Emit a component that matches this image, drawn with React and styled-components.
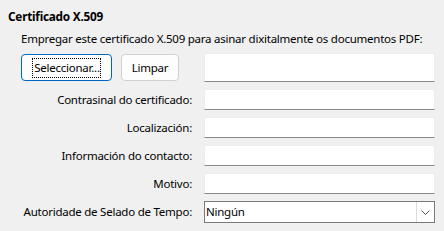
import React from "react";
import styled, { createGlobalStyle } from "styled-components";

const Global = createGlobalStyle`
  html, body { margin: 0; padding: 0; background: #f0f0f0; }
  body { font-family: "Noto Sans", "Segoe UI", sans-serif; font-size: 11.5px; letter-spacing: -0.24px; color: #000; }
`;

const Page = styled.div`
  width: 444px;
  height: 231px;
  box-sizing: border-box;
  padding: 7px 9px 0 8px;
  background: #f0f0f0;
`;

const Title = styled.div`
  font-weight: 700;
  font-size: 11.8px;
  line-height: 18px;
  height: 18px;
`;

const Section = styled.div`
  padding-left: 13px;
`;

const Description = styled.div`
  margin-top: 5px;
  line-height: 18px;
  height: 18px;
  white-space: nowrap;
`;

const Grid = styled.div`
  margin-top: 5px;
  display: grid;
  grid-template-columns: 171px 1fr;
  column-gap: 12px;
  row-gap: 7px;
  align-items: center;
`;

const ButtonRow = styled.div`
  display: flex;
  gap: 9px;
  align-items: center;
`;

const Button = styled.button`
  font: inherit;
  letter-spacing: inherit;
  color: #000;
  height: 27px;
  width: ${(p) => p.$w}px;
  box-sizing: border-box;
  padding: 0;
  border-radius: 4px;
  background: #fdfdfd;
  border: 1px solid ${(p) => (p.$primary ? "#0067c0" : "#d0d0d0")};
  display: flex;
  align-items: center;
  justify-content: center;
  cursor: default;
`;

const FocusText = styled.span`
  outline: 1px dotted #000;
  outline-offset: 0px;
  padding: 1px 0 1px 1px;
  line-height: 16px;
`;

const Label = styled.label`
  text-align: right;
  white-space: nowrap;
  line-height: 18px;
`;

const Input = styled.div`
  height: ${(p) => (p.$tall ? "29px" : "21px")};
  box-sizing: border-box;
  background: #fff;
  border: 1px solid #ececec;
  border-bottom: 1px solid #8a8a8a;
`;

const Select = styled.div`
  height: 22px;
  box-sizing: border-box;
  background: #fff;
  border: 1px solid #7a7a7a;
  display: flex;
  align-items: stretch;
  padding: 0 0 0 1px;
`;

const SelectText = styled.div`
  flex: 1;
  line-height: 20px;
`;

const DropButton = styled.div`
  width: 17px;
  border-left: 1px solid #dcdcdc;
  background: #fff;
  display: flex;
  align-items: center;
  justify-content: center;
`;

export default function App() {
  return (
    <Page>
      <Global />
      <Title>Certificado X.509</Title>
      <Section>
        <Description>
          Empregar este certificado X.509 para asinar dixitalmente os documentos PDF:
        </Description>
        <Grid>
          <ButtonRow>
            <Button $primary $w={91}>
              <FocusText>Seleccionar...</FocusText>
            </Button>
            <Button $w={58}>Limpar</Button>
          </ButtonRow>
          <Input $tall />
          <Label>Contrasinal do certificado:</Label>
          <Input />
          <Label>Localización:</Label>
          <Input />
          <Label>Información do contacto:</Label>
          <Input />
          <Label>Motivo:</Label>
          <Input />
          <Label>Autoridade de Selado de Tempo:</Label>
          <Select>
            <SelectText>Ningún</SelectText>
            <DropButton>
              <svg width="9" height="5" viewBox="0 0 9 5">
                <path d="M0.5 0.5 L4.5 4.5 L8.5 0.5" fill="none" stroke="#555" strokeWidth="1" />
              </svg>
            </DropButton>
          </Select>
        </Grid>
      </Section>
    </Page>
  );
}
